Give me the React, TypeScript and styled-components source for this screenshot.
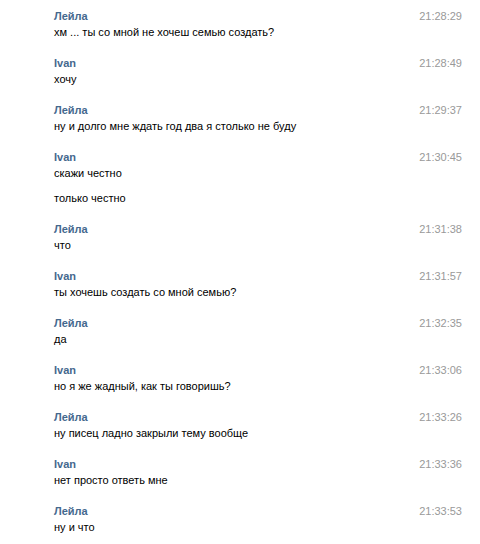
import * as React from "react";
import styled, { createGlobalStyle } from "styled-components";

const GlobalStyle = createGlobalStyle`
  body {
    margin: 0;
    background: #ffffff;
    font-family: Tahoma, "Liberation Sans", Arial, sans-serif;
  }
`;

type Entry = {
  from: string;
  time: string;
  lines: string[];
};

const history: Entry[] = [
  { from: "Лейла", time: "21:28:29", lines: ["хм ... ты со мной не хочеш семью создать?"] },
  { from: "Ivan", time: "21:28:49", lines: ["хочу"] },
  { from: "Лейла", time: "21:29:37", lines: ["ну и долго мне ждать год два я столько не буду"] },
  { from: "Ivan", time: "21:30:45", lines: ["скажи честно", "только честно"] },
  { from: "Лейла", time: "21:31:38", lines: ["что"] },
  { from: "Ivan", time: "21:31:57", lines: ["ты хочешь создать со мной семью?"] },
  { from: "Лейла", time: "21:32:35", lines: ["да"] },
  { from: "Ivan", time: "21:33:06", lines: ["но я же жадный, как ты говоришь?"] },
  { from: "Лейла", time: "21:33:26", lines: ["ну писец ладно закрыли тему вообще"] },
  { from: "Ivan", time: "21:33:36", lines: ["нет просто ответь мне"] },
  { from: "Лейла", time: "21:33:53", lines: ["ну и что"] },
];

const Log = styled.div`
  display: flex;
  flex-direction: column;
  gap: 15px;
  width: 408px;
  padding: 8px 0 0 54px;
`;

const Block = styled.div`
  display: flex;
  flex-direction: column;
`;

const Header = styled.div`
  display: flex;
  justify-content: space-between;
  align-items: center;
  height: 16px;
`;

const Author = styled.span`
  font-family: "Liberation Sans", Arial, sans-serif;
  font-weight: 700;
  font-size: 11px;
  color: #45688e;
`;

const Stamp = styled.span`
  font-family: "Liberation Sans", Arial, sans-serif;
  font-size: 11px;
  color: #999999;
`;

const Line = styled.div`
  font-family: "Liberation Sans", Arial, sans-serif;
  font-size: 11px;
  line-height: 16px;
  color: #000000;

  & + & {
    margin-top: 9px;
  }
`;

export default function App() {
  return (
    <>
      <GlobalStyle />
      <Log>
        {history.map((m, i) => (
          <Block key={i}>
            <Header>
              <Author>{m.from}</Author>
              <Stamp>{m.time}</Stamp>
            </Header>
            {m.lines.map((l, j) => (
              <Line key={j}>{l}</Line>
            ))}
          </Block>
        ))}
      </Log>
    </>
  );
}
